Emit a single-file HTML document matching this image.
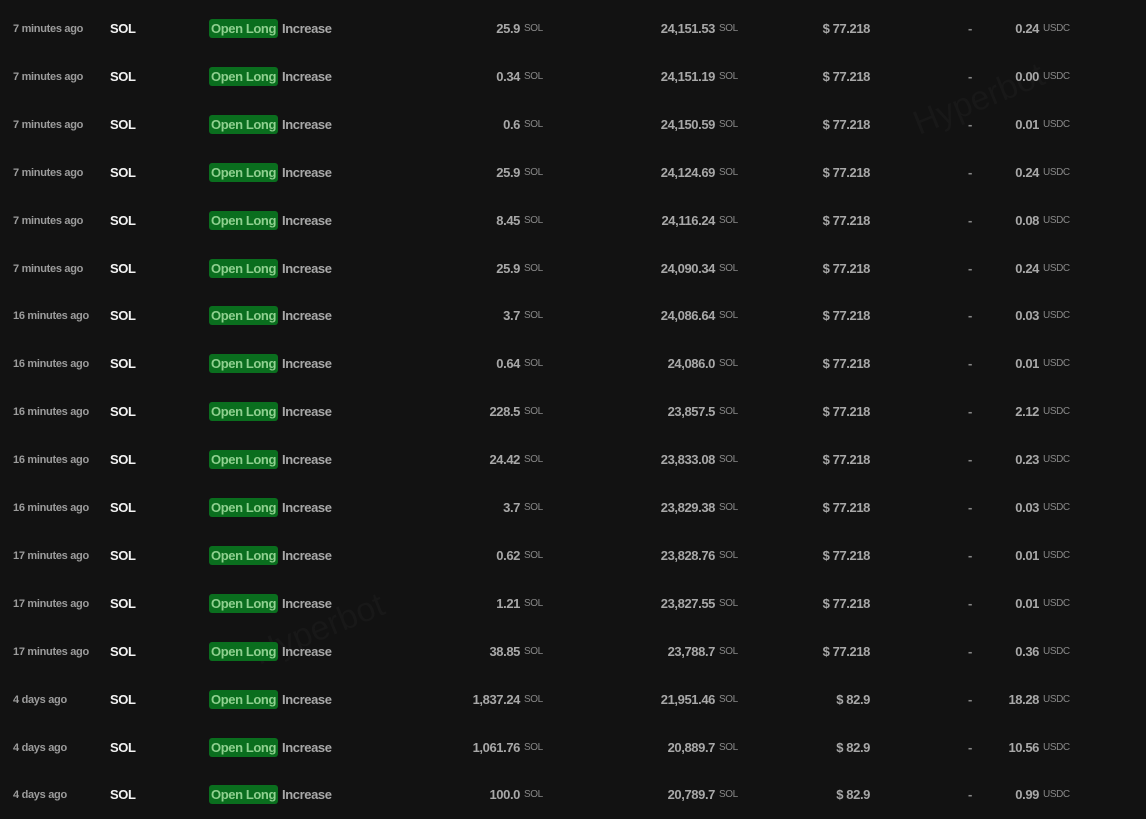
<!DOCTYPE html>
<html><head><meta charset="utf-8"><style>
body{margin:0;width:1146px;height:819px;background:#121212;overflow:hidden;position:relative;font-family:"Liberation Sans",sans-serif;font-weight:bold}
.r{position:absolute;left:0;width:1146px;height:20px}
.r span{position:absolute;top:0;line-height:20px;white-space:nowrap;letter-spacing:-0.4px}
.t{left:13px;font-size:11px;color:#9c9c9c;letter-spacing:-0.3px!important}
.s{left:110px;font-size:13px;color:#f2f2f2}
.b{left:209px;top:0;height:19px!important;line-height:19px!important;padding:0 2px;background:#0a6e1e;color:#8fd08f;border-radius:3px;font-size:13px}
.i{left:282px;font-size:13px;color:#a8a8a8}
.a{right:626px;font-size:13px;color:#a8a8a8}
.u1{left:524px;font-size:10px;color:#888;font-weight:normal}
.c{right:431px;font-size:13px;color:#a8a8a8}
.u2{left:719px;font-size:10px;color:#888;font-weight:normal}
.p{right:276px;font-size:13px;color:#a8a8a8}
.d{left:968px;font-size:13px;color:#888}
.f{right:107px;font-size:13px;color:#a8a8a8}
.u3{left:1043px;font-size:10px;color:#888;font-weight:normal}
.wm{position:absolute;font-size:34px;color:#181818;font-weight:normal;transform:rotate(-22deg)}
</style></head><body>
<div class="wm" style="left:910px;top:80px">Hyperbot</div>
<div class="wm" style="left:250px;top:610px">Hyperbot</div>
<div id="rows"></div>
<script>
var d=[["7 minutes ago","25.9","24,151.53","$ 77.218","0.24"],["7 minutes ago","0.34","24,151.19","$ 77.218","0.00"],["7 minutes ago","0.6","24,150.59","$ 77.218","0.01"],["7 minutes ago","25.9","24,124.69","$ 77.218","0.24"],["7 minutes ago","8.45","24,116.24","$ 77.218","0.08"],["7 minutes ago","25.9","24,090.34","$ 77.218","0.24"],["16 minutes ago","3.7","24,086.64","$ 77.218","0.03"],["16 minutes ago","0.64","24,086.0","$ 77.218","0.01"],["16 minutes ago","228.5","23,857.5","$ 77.218","2.12"],["16 minutes ago","24.42","23,833.08","$ 77.218","0.23"],["16 minutes ago","3.7","23,829.38","$ 77.218","0.03"],["17 minutes ago","0.62","23,828.76","$ 77.218","0.01"],["17 minutes ago","1.21","23,827.55","$ 77.218","0.01"],["17 minutes ago","38.85","23,788.7","$ 77.218","0.36"],["4 days ago","1,837.24","21,951.46","$ 82.9","18.28"],["4 days ago","1,061.76","20,889.7","$ 82.9","10.56"],["4 days ago","100.0","20,789.7","$ 82.9","0.99"]];
var h="";d.forEach(function(r,k){var y=19+k*47.9;h+='<div class="r" style="top:'+y+'px"><span class="t">'+r[0]+'</span><span class="s">SOL</span><span class="b">Open Long</span><span class="i">Increase</span><span class="a">'+r[1]+'</span><span class="u1">SOL</span><span class="c">'+r[2]+'</span><span class="u2">SOL</span><span class="p">'+r[3]+'</span><span class="d">-</span><span class="f">'+r[4]+'</span><span class="u3">USDC</span></div>'});
document.getElementById("rows").innerHTML=h;
</script>
</body></html>
